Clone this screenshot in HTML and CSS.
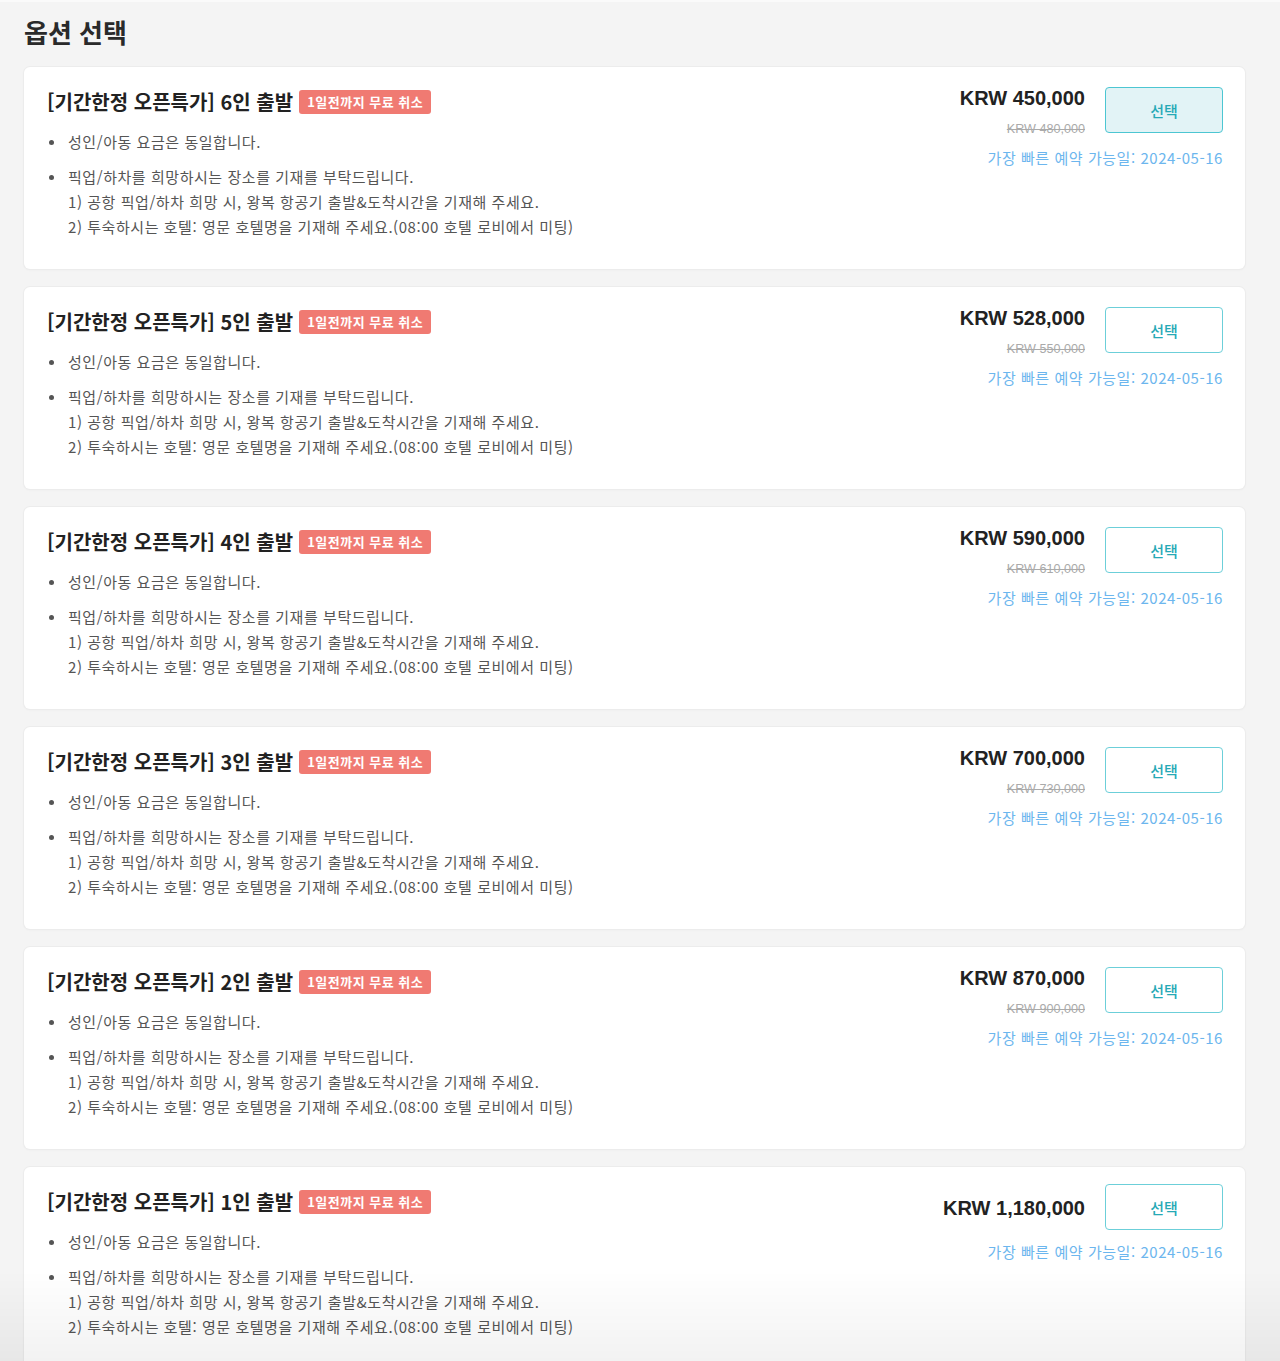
FILE: index.html
```html
<!DOCTYPE html>
<html lang="ko">
<head>
<meta charset="utf-8">
<title>옵션 선택</title>
<link rel="stylesheet" href="styles.css">
</head>
<body>
<div class="page">
  <h1 class="page-title">옵션 선택</h1>
  <div class="options">

    <div class="card">
      <div class="info">
        <div class="title-row"><span class="title">[기간한정 오픈특가] 6인 출발</span><span class="badge">1일전까지 무료 취소</span></div>
        <ul class="notes">
          <li>성인/아동 요금은 동일합니다.</li>
          <li>픽업/하차를 희망하시는 장소를 기재를 부탁드립니다.<br>1) 공항 픽업/하차 희망 시, 왕복 항공기 출발&amp;도착시간을 기재해 주세요.<br>2) 투숙하시는 호텔: 영문 호텔명을 기재해 주세요.(08:00 호텔 로비에서 미팅)</li>
        </ul>
      </div>
      <div class="buy">
        <div class="buy-row">
          <div class="prices"><div class="price">KRW 450,000</div><div class="old-price">KRW 480,000</div></div>
          <button class="select active">선택</button>
        </div>
        <div class="date">가장 빠른 예약 가능일: 2024-05-16</div>
      </div>
    </div>

    <div class="card">
      <div class="info">
        <div class="title-row"><span class="title">[기간한정 오픈특가] 5인 출발</span><span class="badge">1일전까지 무료 취소</span></div>
        <ul class="notes">
          <li>성인/아동 요금은 동일합니다.</li>
          <li>픽업/하차를 희망하시는 장소를 기재를 부탁드립니다.<br>1) 공항 픽업/하차 희망 시, 왕복 항공기 출발&amp;도착시간을 기재해 주세요.<br>2) 투숙하시는 호텔: 영문 호텔명을 기재해 주세요.(08:00 호텔 로비에서 미팅)</li>
        </ul>
      </div>
      <div class="buy">
        <div class="buy-row">
          <div class="prices"><div class="price">KRW 528,000</div><div class="old-price">KRW 550,000</div></div>
          <button class="select">선택</button>
        </div>
        <div class="date">가장 빠른 예약 가능일: 2024-05-16</div>
      </div>
    </div>

    <div class="card">
      <div class="info">
        <div class="title-row"><span class="title">[기간한정 오픈특가] 4인 출발</span><span class="badge">1일전까지 무료 취소</span></div>
        <ul class="notes">
          <li>성인/아동 요금은 동일합니다.</li>
          <li>픽업/하차를 희망하시는 장소를 기재를 부탁드립니다.<br>1) 공항 픽업/하차 희망 시, 왕복 항공기 출발&amp;도착시간을 기재해 주세요.<br>2) 투숙하시는 호텔: 영문 호텔명을 기재해 주세요.(08:00 호텔 로비에서 미팅)</li>
        </ul>
      </div>
      <div class="buy">
        <div class="buy-row">
          <div class="prices"><div class="price">KRW 590,000</div><div class="old-price">KRW 610,000</div></div>
          <button class="select">선택</button>
        </div>
        <div class="date">가장 빠른 예약 가능일: 2024-05-16</div>
      </div>
    </div>

    <div class="card">
      <div class="info">
        <div class="title-row"><span class="title">[기간한정 오픈특가] 3인 출발</span><span class="badge">1일전까지 무료 취소</span></div>
        <ul class="notes">
          <li>성인/아동 요금은 동일합니다.</li>
          <li>픽업/하차를 희망하시는 장소를 기재를 부탁드립니다.<br>1) 공항 픽업/하차 희망 시, 왕복 항공기 출발&amp;도착시간을 기재해 주세요.<br>2) 투숙하시는 호텔: 영문 호텔명을 기재해 주세요.(08:00 호텔 로비에서 미팅)</li>
        </ul>
      </div>
      <div class="buy">
        <div class="buy-row">
          <div class="prices"><div class="price">KRW 700,000</div><div class="old-price">KRW 730,000</div></div>
          <button class="select">선택</button>
        </div>
        <div class="date">가장 빠른 예약 가능일: 2024-05-16</div>
      </div>
    </div>

    <div class="card">
      <div class="info">
        <div class="title-row"><span class="title">[기간한정 오픈특가] 2인 출발</span><span class="badge">1일전까지 무료 취소</span></div>
        <ul class="notes">
          <li>성인/아동 요금은 동일합니다.</li>
          <li>픽업/하차를 희망하시는 장소를 기재를 부탁드립니다.<br>1) 공항 픽업/하차 희망 시, 왕복 항공기 출발&amp;도착시간을 기재해 주세요.<br>2) 투숙하시는 호텔: 영문 호텔명을 기재해 주세요.(08:00 호텔 로비에서 미팅)</li>
        </ul>
      </div>
      <div class="buy">
        <div class="buy-row">
          <div class="prices"><div class="price">KRW 870,000</div><div class="old-price">KRW 900,000</div></div>
          <button class="select">선택</button>
        </div>
        <div class="date">가장 빠른 예약 가능일: 2024-05-16</div>
      </div>
    </div>

    <div class="card">
      <div class="info">
        <div class="title-row"><span class="title">[기간한정 오픈특가] 1인 출발</span><span class="badge">1일전까지 무료 취소</span></div>
        <ul class="notes">
          <li>성인/아동 요금은 동일합니다.</li>
          <li>픽업/하차를 희망하시는 장소를 기재를 부탁드립니다.<br>1) 공항 픽업/하차 희망 시, 왕복 항공기 출발&amp;도착시간을 기재해 주세요.<br>2) 투숙하시는 호텔: 영문 호텔명을 기재해 주세요.(08:00 호텔 로비에서 미팅)</li>
        </ul>
      </div>
      <div class="buy">
        <div class="buy-row">
          <div class="prices"><div class="price">KRW 1,180,000</div></div>
          <button class="select">선택</button>
        </div>
        <div class="date">가장 빠른 예약 가능일: 2024-05-16</div>
      </div>
    </div>

  </div>
</div>
<div class="fade"></div>
</body>
</html>
```
FILE: styles.css
```css
* { box-sizing: border-box; }
html, body {
  margin: 0;
  padding: 0;
  background: #f4f4f4;
  font-family: "Noto Sans CJK KR", "Noto Sans", sans-serif;
  color: #222;
}
body { border-top: 2px solid #fafafa; }
.page {
  padding: 0 35px 40px 24px;
}
.page-title {
  margin: 0;
  padding-top: 12px;
  font-size: 26px;
  line-height: 36px;
  font-weight: 700;
  color: #2a2a2a;
  margin-bottom: 17px;
}
.options {
  display: flex;
  flex-direction: column;
  gap: 18px;
}
.card {
  background: #fff;
  border-radius: 6px;
  box-shadow: 0 0 0 1px #ececec, 0 1px 3px rgba(0,0,0,0.04);
  display: flex;
  justify-content: space-between;
  padding: 0 22px 0 23px;
  min-height: 202px;
}
.info {
  padding: 21px 0 29px;
}
.title-row {
  display: flex;
  align-items: center;
  gap: 6px;
  height: 28px;
}
.title {
  font-size: 20px;
  font-weight: 700;
  line-height: 28px;
  color: #222;
  letter-spacing: 0;
}
.badge {
  background: #f07a72;
  color: #fff;
  font-size: 13px;
  font-weight: 700;
  line-height: 24px;
  height: 24px;
  padding: 0 8px;
  border-radius: 3px;
  letter-spacing: 0.5px;
}
.notes {
  list-style: none;
  margin: 13px 0 0;
  padding: 0;
}
.notes li {
  position: relative;
  padding-left: 21px;
  font-size: 15px;
  line-height: 25px;
  color: #555;
  letter-spacing: 0.55px;
}
.notes li + li { margin-top: 10px; }
.notes li::before {
  content: "";
  position: absolute;
  left: 2px;
  top: 11px;
  width: 5px;
  height: 5px;
  border-radius: 50%;
  background: #555;
}
.buy {
  padding-top: 17px;
  display: flex;
  flex-direction: column;
  align-items: flex-end;
}
.buy-row {
  display: flex;
  align-items: center;
  gap: 20px;
}
.prices {
  display: flex;
  flex-direction: column;
  align-items: flex-end;
  margin-bottom: -2px;
}
.price {
  font-family: "Liberation Sans", Arial, sans-serif;
  font-weight: 700;
  font-size: 20px;
  line-height: 28px;
  color: #222;
}
.old-price {
  margin-top: 8px;
  font-family: "Liberation Sans", Arial, sans-serif;
  font-size: 12.6px;
  line-height: 18px;
  color: #aaa;
  text-decoration: line-through;
}
.select {
  width: 118px;
  height: 46px;
  border: 1px solid #6ccfd9;
  border-radius: 4px;
  background: #fff;
  color: #26a9b6;
  font-family: "Noto Sans CJK KR", sans-serif;
  font-size: 15px;
  font-weight: 500;
  padding: 0;
}
.select.active {
  background: #e2f3f6;
  border-color: #4cc6d2;
}
.date {
  margin-top: 12px;
  font-size: 15px;
  line-height: 20px;
  color: #6cb6ee;
  letter-spacing: 0.55px;
}
.fade {
  position: fixed;
  left: 0;
  right: 0;
  bottom: 0;
  height: 90px;
  background: linear-gradient(to bottom, rgba(0,0,0,0), rgba(0,0,0,0.05));
  pointer-events: none;
}
```
